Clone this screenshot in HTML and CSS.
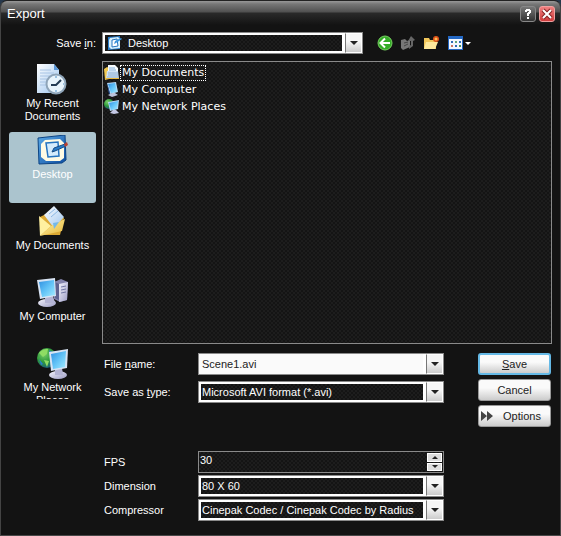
FILE: index.html
```html
<!DOCTYPE html>
<html lang="en">
<head>
<meta charset="utf-8">
<title>Export</title>
<link rel="stylesheet" href="styles.css">
</head>
<body>
<svg class="defs" aria-hidden="true">
  <defs>
    <linearGradient id="screen" x1="0" y1="0" x2="1" y2="1"><stop offset="0" stop-color="#2f8fe0"/><stop offset=".5" stop-color="#62c3f7"/><stop offset="1" stop-color="#a4ecff"/></linearGradient>
    <linearGradient id="paper" x1="0" y1="0" x2="1" y2="1"><stop offset="0" stop-color="#ffffff"/><stop offset="1" stop-color="#9cc4ee"/></linearGradient>
    <linearGradient id="folder" x1="0" y1="0" x2="1" y2="1"><stop offset="0" stop-color="#fff3a8"/><stop offset="1" stop-color="#e8b83c"/></linearGradient>
    <linearGradient id="grey" x1="0" y1="0" x2="1" y2="1"><stop offset="0" stop-color="#f4f4fc"/><stop offset="1" stop-color="#9c9cc4"/></linearGradient>
    <radialGradient id="globe" cx=".35" cy=".3" r=".8"><stop offset="0" stop-color="#7ccf6a"/><stop offset=".5" stop-color="#2f9a3c"/><stop offset="1" stop-color="#14508c"/></radialGradient>
    <linearGradient id="blue" x1="0" y1="0" x2="1" y2="1"><stop offset="0" stop-color="#5aaae8"/><stop offset="1" stop-color="#0c4ca0"/></linearGradient>
    <symbol id="i-recent" viewBox="0 0 32 32">
      <path d="M0 0h17l5 6v23H0z" fill="url(#paper)"/><path d="M17 0v6h5z" fill="#5c98d8"/>
      <path d="M3 6h11M3 9h14M3 12h10M3 15h7M3 18h6M3 21h6" stroke="#a8c4e4"/>
      <circle cx="19" cy="20" r="9.500" fill="#e8f4fc" stroke="#8ea4b8" stroke-width="2"/>
      <path d="M24 16l-5 5h-5" stroke="#243c54" stroke-width="2" fill="none"/><path d="M19 12v2M19 26v2M26 20h1" stroke="#4c90c8"/>
    </symbol>
    <symbol id="i-desktop" viewBox="0 0 32 32">
      <path d="M1 3l27-3 1 25-4 3-23 1z" fill="url(#blue)" stroke="#0c4484"/>
      <path d="M8 5l15-1 4 4v15l-4 3H9l-5-4V9z" fill="#fffbe4"/>
      <path d="M9 8l12-1 1 14-11 1z" fill="#d4ecfc" stroke="#2474c0" stroke-width="1.500"/>
      <path d="M15 17l2-4 11-4 1 2-11 5z" fill="#287cc8" stroke="#184c84"/><path d="M27 9l3-2 1 3-3 2z" fill="#b84030"/>
    </symbol>
    <symbol id="i-desktop-small" viewBox="0 0 16 16">
      <path d="M1 2l12-1v13l-12 1z" fill="#2c80cc"/><path d="M3 3l8-1 2 2v9l-9 1-2-2V5z" fill="#d8f0fc"/>
      <path d="M5 5l5-1 1 7-6 1z" fill="#fff" stroke="#2474c0"/><path d="M7 9l1-3 6-3 1 1-6 4z" fill="#3c94dc"/>
    </symbol>
    <symbol id="i-docs" viewBox="0 0 32 32">
      <path d="M3 11l14-7 10 8-4 17-20 0z" fill="#dca934"/><path d="M7 9l10-9 10 11-10 11z" fill="url(#paper)"/>
      <path d="M12 8l6-5M14 11l7-6" stroke="#8cb8e4"/>
      <path d="M2 10l12 10-11 10z" fill="#fff0a0"/><path d="M3 30l11-10 14-7-3 12z" fill="url(#folder)"/><path d="M16 17l6-1-5 7z" fill="#74b8e8"/>
    </symbol>
    <symbol id="i-computer" viewBox="0 0 32 32">
      <path d="M17 5l7-3 7 3-1 18-7 2-6-3z" fill="#8484ac"/><path d="M18 5l6 3v16l-6-3z" fill="#5e6290"/><path d="M22 7l9-2-1 18-8 2z" fill="url(#grey)"/><path d="M24 10l5-1M24 13l5-1M24 16l5-1" stroke="#7278a4"/>
      <ellipse cx="10" cy="26" rx="9" ry="4" fill="url(#grey)"/><path d="M8 20l8-1 2 7H8z" fill="#b4b4d4"/>
      <path d="M0 3l18-2 1 18-16 3z" fill="#d8e4f4"/><path d="M2 5l15-2 1 15-13 2z" fill="url(#screen)"/>
    </symbol>
    <symbol id="i-network" viewBox="0 0 32 32">
      <circle cx="10" cy="10" r="10" fill="url(#globe)"/><path d="M2 5c3-4 7-4 9-4l-1 5-4 3zM7 12l5 1-2 6z" fill="#8fdc64"/><path d="M2 11l4 5-2 1zM12 2l5 3-4 3z" fill="#287cd0"/>
      <ellipse cx="21" cy="27" rx="9" ry="4" fill="url(#grey)"/><path d="M18 21l7-1 1 7h-8z" fill="#b4b4d4"/>
      <path d="M12 4l19-3-1 19-16 3z" fill="#d8e4f4"/><path d="M14 6l15-3-1 16-12 2z" fill="url(#screen)"/>
    </symbol>
    <symbol id="i-network-small" viewBox="0 0 16 16">
      <circle cx="5" cy="5" r="5" fill="url(#globe)"/><path d="M4 3l11-2-1 9-8 2z" fill="#b8d8f4"/><path d="M5 4l9-2-1 8-6 1z" fill="url(#screen)"/>
      <path d="M9 11h3l3 3-5 1-4-1z" fill="#c4c8e4"/>
    </symbol>
    <symbol id="i-folderdocs" viewBox="0 0 16 16">
      <path d="M0 4l3-2 2 1v11l-4 1z" fill="#f0c850"/><path d="M4 0h7l3 3v7H4z" fill="#f8fcff"/><path d="M5 3h6M5 5h7" stroke="#7cacdc"/>
      <path d="M3 6h11l1 8H2z" fill="#cfe2f6"/><path d="M4 8h10M4 10h10M3 12h11" stroke="#8eb0d4"/><path d="M1 13h14v1H1z" fill="#e8b840"/>
    </symbol>
    <symbol id="i-pc-small" viewBox="0 0 16 16">
      <path d="M3 1l9-1 2 10-8 2z" fill="#b8d8f4"/><path d="M4 2l7-1 2 9-6 1z" fill="url(#screen)"/><path d="M3 1l3 10-1 1z" fill="#2858a4"/><path d="M8 11h3l3 2-6 2-4-2z" fill="#bcc4dc"/>
    </symbol>
  </defs>
</svg>
<main class="dialog">
  <header class="titlebar">
    <h1>Export</h1>
    <button class="caption" type="button" aria-label="Help"><svg viewBox="0 0 14 14"><path d="M4 5V3h1V2h4v1h1v3H9v1H8v2H6V6h1V5h1V4H6v1zM6 10h2v2H6z" fill="#fff"/></svg></button>
    <button class="caption close" type="button" aria-label="Close"><svg viewBox="0 0 14 14"><path d="M3 3l8 8M11 3l-8 8" stroke="#842424" stroke-width="4"/><path d="M3 3l8 8M11 3l-8 8" stroke="#fff" stroke-width="2"/></svg></button>
  </header>
  <form class="content">
    <label class="look-label" for="look">Save <u>i</u>n:</label>
    <div class="look-row">
      <div class="combo with-icon">
        <select id="look"><option>Desktop</option></select>
        <svg class="combo-icon"><use href="#i-desktop-small"/></svg>
        <span class="arrow"></span>
      </div>
      <div class="tools">
        <button type="button" aria-label="Back"><svg viewBox="0 0 16 16"><circle cx="8" cy="8" r="7" fill="#35ac28" stroke="#77cf61"/><path d="M13 8H4M8 3.500L3.500 8 8 12.500" fill="none" stroke="#fff" stroke-width="2"/></svg></button>
        <button type="button" aria-label="Up one level"><svg viewBox="0 0 16 16"><path d="M1 5l4-1 2 2 3-1v7l-7 3-2-2z" fill="#777"/><path d="M11 1l4 4-2 1v5l-4 3v-3l2-1V6L8 6z" fill="#666"/><path d="M4 8l4-1M4 11l4-2" stroke="#444"/></svg></button>
        <button type="button" aria-label="New folder"><svg viewBox="0 0 16 16"><path d="M1 3h5l1 2h6v9H1z" fill="#f2c75a"/><path d="M3 7h12l-3 7H1z" fill="#ffe99c"/><circle cx="13" cy="4" r="3" fill="#e05818"/><path d="M13 1v6M10 4h6M11 2l4 4M15 2l-4 4" stroke="#d84c1c"/><circle cx="13" cy="4" r="1.500" fill="#ffbc54"/></svg></button>
        <button class="views" type="button" aria-label="Views"><svg viewBox="0 0 16 16"><path d="M0 1h15v14H0z" fill="#2468c4"/><path d="M1 4h13v10H1z" fill="#f4f8ff"/><path d="M3 6h2v2H3zM11 6h2v2h-2zM7 10h2v2H7z" fill="#2c6cb8"/><path d="M7 6h2v2H7z" fill="#64a474"/><path d="M3 10h2v2H3z" fill="#c87464"/><path d="M11 10h2v2h-2z" fill="#48905c"/></svg><span></span></button>
      </div>
    </div>
    <nav class="places">
      <a href="#recent"><svg><use href="#i-recent"/></svg>My Recent Documents</a>
      <a class="current" href="#desktop"><svg><use href="#i-desktop"/></svg>Desktop</a>
      <a href="#documents"><svg><use href="#i-docs"/></svg>My Documents</a>
      <a href="#computer"><svg><use href="#i-computer"/></svg>My Computer</a>
      <a href="#network"><svg><use href="#i-network"/></svg>My Network Places</a>
    </nav>
    <div class="main">
      <ul class="files">
        <li><svg><use href="#i-folderdocs"/></svg><span class="focused">My Documents</span></li>
        <li><svg><use href="#i-pc-small"/></svg><span>My Computer</span></li>
        <li><svg><use href="#i-network-small"/></svg><span>My Network Places</span></li>
      </ul>
      <div class="bottom">
        <div class="fields">
          <label for="name">File <u>n</u>ame:</label>
          <div class="combo editable"><input id="name" type="text" value="Scene1.avi"><span class="arrow"></span></div>
          <label for="type">Save as <u>t</u>ype:</label>
          <div class="combo"><select id="type"><option>Microsoft AVI format (*.avi)</option></select><span class="arrow"></span></div>
        </div>
        <div class="actions">
          <button class="default" type="button"><u>S</u>ave</button>
          <button type="button">Cancel</button>
          <button class="options" type="button"><svg viewBox="0 0 12 10"><path d="M0 0l6 5-6 5zM6 0l6 5-6 5z" fill="#444"/></svg><span>Options</span></button>
        </div>
        <div class="fields video">
          <label for="fps">FPS</label>
          <div class="spin"><input id="fps" type="text" value="30"><span class="steps"><button type="button" aria-label="Increase"></button><button type="button" aria-label="Decrease"></button></span></div>
          <label for="dimension">Dimension</label>
          <div class="combo"><select id="dimension"><option>80 X 60</option></select><span class="arrow"></span></div>
          <label for="compressor">Compressor</label>
          <div class="combo"><select id="compressor"><option>Cinepak Codec / Cinepak Codec by Radius</option></select><span class="arrow"></span></div>
        </div>
      </div>
    </div>
  </form>
</main>
</body>
</html>
```
FILE: styles.css
```css
* { box-sizing: border-box; }
:root {
  --well: repeating-conic-gradient(#141414 0 25%, #1d1d1d 0 50%) 0 0 / 4px 4px;
}
body {
  margin: 0;
  background: #26384c;
  color: #fff;
  font: 11px/14px "Liberation Sans", Arial, sans-serif;
}
button, input, select { font: inherit; margin: 0; }
.defs { position: absolute; width: 0; height: 0; }
.dialog {
  min-height: 100vh;
  border: 1px solid #444;
  border-top-color: #222;
  border-bottom: 2px solid #484848;
  border-radius: 7px 7px 0 0;
  background: #131313;
}
.titlebar {
  display: flex;
  align-items: center;
  gap: 3px;
  height: 24px;
  padding: 2px 5px 0 6px;
  border-radius: 6px 6px 0 0;
  background: linear-gradient(#999 0, #777 3px, #505050 11px, #2a2a2a 12px, #131313 24px);
}
.titlebar h1 { flex: 1; margin: 0; font-size: 13px; font-weight: normal; line-height: 20px; }
.caption {
  width: 16px;
  height: 16px;
  padding: 0;
  border: 1px solid #888;
  border-radius: 3px;
  background: linear-gradient(#777, #333);
}
.caption svg { display: block; width: 14px; height: 14px; }
.caption.close { border-color: #f0a0a0; background: linear-gradient(#f08080, #d03c3c); }
.content {
  display: grid;
  grid-template-columns: 87px 1fr;
  gap: 7px 6px;
  padding: 7px 8px 14px;
}
.look-label { align-self: center; justify-self: end; }
.look-row { display: flex; }
.look-row .combo { flex: 1; }

.combo {
  display: grid;
  grid-template-columns: 1fr 17px;
  height: 22px;
  border: 1px solid #8a8a8a;
  background: #fff;
}
.combo select, .combo input {
  grid-area: 1 / 1 / 2 / 3;
  width: 100%;
  min-width: 0;
  height: 20px;
  padding: 0 18px 0 1px;
  border: 2px solid #fff;
  border-radius: 0;
  outline: 0;
  appearance: none;
  background: var(--well);
  color: #fff;
}
.combo.editable input { border: 0; padding-left: 3px; background: #fafafa; color: #222; }
.combo.with-icon select { padding-left: 23px; }
.combo-icon { grid-area: 1 / 1; align-self: center; width: 16px; height: 16px; margin-left: 4px; pointer-events: none; }
.arrow {
  display: grid;
  place-items: center;
  grid-area: 1 / 2;
  border: 1px solid #fff;
  border-left-color: #777;
  background: linear-gradient(#f6f6f6 40%, #ccc);
  box-shadow: -3px 0 #fff;
  pointer-events: none;
}
.arrow::after, .views span { content: ""; border: solid transparent; border-width: 4px 4px 0; border-top-color: #222; }

.tools { display: flex; align-items: center; gap: 7px; width: 189px; padding-left: 14px; }
.tools button { display: flex; align-items: center; padding: 0; border: 0; background: none; }
.tools svg { width: 16px; height: 16px; }
.tools .views { gap: 1px; margin-left: 2px; }
.views span { border-width: 3px 3px 0; border-top-color: #fff; }

.places { height: 338px; overflow: hidden; }
.places a {
  display: block;
  height: 71px;
  padding: 3px 6px 0;
  border-radius: 3px;
  color: #fff;
  line-height: 13px;
  text-align: center;
  text-decoration: none;
}
.places svg { display: block; width: 32px; height: 32px; margin: 0 auto 1px; }
.places .current { background: #abc4ce; }

.files {
  height: 283px;
  margin: 0 0 9px;
  padding: 2px 1px;
  border: 1px solid #8a8a8a;
  background: var(--well);
  list-style: none;
  font: 11px/14px "DejaVu Sans", Verdana, sans-serif;
}
.files li { display: flex; align-items: center; height: 17px; }
.files svg { width: 16px; height: 16px; }
.files span { padding: 0 1px; border: 1px solid transparent; }
.files .focused { border: 1px dotted #fff; }

.bottom { display: grid; grid-template-columns: 1fr 73px; gap: 24px 34px; padding-right: 1px; }
.fields {
  display: grid;
  grid-template-columns: 94px 1fr;
  align-items: center;
  align-content: start;
  row-gap: 6px;
  padding-left: 2px;
}
.fields.video { row-gap: 2px; }
.actions { display: grid; gap: 4px; align-content: start; }
.actions button {
  height: 22px;
  padding: 0;
  border: 1px solid #999;
  border-radius: 3px;
  background: linear-gradient(#fafafa 40%, #ccc);
  color: #222;
}
.actions .default { border: 2px solid #65b9e6; }
.actions .options { display: flex; align-items: center; gap: 10px; padding-left: 2px; }
.options svg { flex: none; width: 12px; height: 10px; }

.spin { display: flex; height: 22px; border: 1px solid #8a8a8a; background: var(--well); }
.spin input { flex: 1; min-width: 0; padding: 0 0 4px 1px; border: 0; outline: 0; background: none; color: #fff; }
.steps { display: grid; gap: 1px; width: 16px; padding: 1px 1px 1px 0; }
.steps button { display: grid; place-items: center; padding: 0; border: 1px solid #fff; border-radius: 0; background: #ddd; }
.steps button::after { content: ""; border: solid transparent; border-width: 0 3px 3px; border-bottom-color: #222; }
.steps button:last-child::after { border-width: 3px 3px 0; border-top-color: #222; }
```
